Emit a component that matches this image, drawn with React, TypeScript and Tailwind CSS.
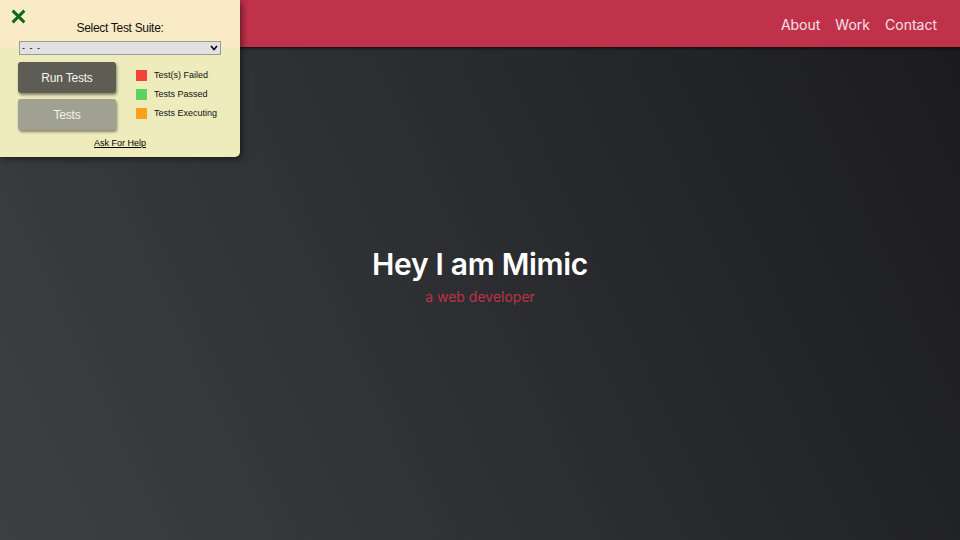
import React from "react";

export default function App() {
  return (
    <div className="relative w-[960px] h-[540px] overflow-hidden bg-[linear-gradient(65deg,#3d4043_0%,#2c2d30_50%,#1b1b1d_100%)]" style={{ fontFamily: "Inter, 'Open Sans', sans-serif" }}>
      <header className="h-[47px] bg-[#c0314a] shadow-[0_1px_3px_rgba(0,0,0,0.8)] flex items-center justify-end pr-[23px] pt-[2px] gap-[15px] text-[14px] text-[#f3e3e7]">
        <span>About</span>
        <span>Work</span>
        <span>Contact</span>
      </header>
      <main className="flex flex-col items-center pt-[197px]">
        <h1 className="text-[30px] font-semibold text-white leading-[40px] tracking-[-0.3px]">Hey I am Mimic</h1>
        <p className="text-[14px] text-[#c0314a] leading-[20px] mt-[3px]">a web developer</p>
      </main>

      <div className="absolute left-0 top-0 w-[240px] h-[157px] rounded-br-[5px] overflow-hidden bg-[#eeebbd] shadow-[2px_2px_6px_rgba(0,0,0,0.5)] text-black" style={{ fontFamily: "'Liberation Sans', Arial, sans-serif" }}>
        <div className="absolute left-0 top-0 w-full h-[47px] bg-[#f9ebc5]" />
        <div className="relative flex flex-col">
          <div className="absolute left-[8px] top-[6px] w-[20px] h-[20px] flex items-center justify-center">
            <svg width="17" height="17" viewBox="0 0 16 16">
              <path d="M2.5 2.5 L13.5 13.5 M13.5 2.5 L2.5 13.5" stroke="#0b6a12" strokeWidth="2.8" strokeLinecap="butt" />
            </svg>
          </div>
          <div className="text-center text-[12px] tracking-[-0.3px] leading-[16px] mt-[20px] text-[#111]">Select Test Suite:</div>
          <div className="mx-[19px] mt-[5px] h-[14px] bg-[#e1e1e1] border border-[#9a9a9a] flex items-center justify-between px-[2px] text-[9px] leading-none">
            <span className="tracking-[1px]">- - -</span>
            <svg width="8" height="6" viewBox="0 0 8 6"><path d="M1 1 L4 4.5 L7 1" stroke="#000" strokeWidth="1.6" fill="none" /></svg>
          </div>
          <div className="flex mt-[7px] pl-[18px]">
            <div className="flex flex-col gap-[6px]">
              <div className="w-[98px] h-[31px] rounded-[3px] bg-[#5e5d53] text-[#f4f4ee] text-[12px] tracking-[-0.2px] flex items-center justify-center shadow-[1px_2px_3px_rgba(0,0,0,0.45)]">Run Tests</div>
              <div className="w-[98px] h-[31px] rounded-[3px] bg-[#a1a193] text-[#f4f4ee] text-[12px] tracking-[-0.2px] flex items-center justify-center shadow-[1px_2px_3px_rgba(0,0,0,0.45)]">Tests</div>
            </div>
            <div className="flex flex-col gap-[8px] ml-[20px] mt-[8px] text-[9px] leading-[11px] text-[#111]">
              <div className="flex items-center gap-[7px]"><span className="w-[11px] h-[11px] bg-[#f44336]" /><span>Test(s) Failed</span></div>
              <div className="flex items-center gap-[7px]"><span className="w-[11px] h-[11px] bg-[#5cd35c]" /><span>Tests Passed</span></div>
              <div className="flex items-center gap-[7px]"><span className="w-[11px] h-[11px] bg-[#fca21a]" /><span>Tests Executing</span></div>
            </div>
          </div>
          <div className="text-center text-[9px] underline mt-[7px] leading-[12px]">Ask For Help</div>
        </div>
      </div>
    </div>
  );
}
